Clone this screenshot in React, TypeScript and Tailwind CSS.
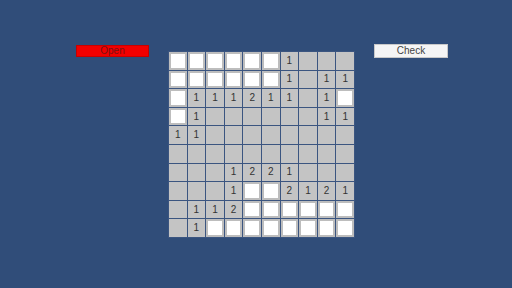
import React from 'react';

// W = revealed white tile, '' = grey blank, digits = grey with hint
const board: string[][] = [
  ['W', 'W', 'W', 'W', 'W', 'W', '1', '', '', ''],
  ['W', 'W', 'W', 'W', 'W', 'W', '1', '', '1', '1'],
  ['W', '1', '1', '1', '2', '1', '1', '', '1', 'W'],
  ['W', '1', '', '', '', '', '', '', '1', '1'],
  ['1', '1', '', '', '', '', '', '', '', ''],
  ['', '', '', '', '', '', '', '', '', ''],
  ['', '', '', '1', '2', '2', '1', '', '', ''],
  ['', '', '', '1', 'W', 'W', '2', '1', '2', '1'],
  ['', '1', '1', '2', 'W', 'W', 'W', 'W', 'W', 'W'],
  ['', '1', 'W', 'W', 'W', 'W', 'W', 'W', 'W', 'W'],
];

const Cell = ({ value }: { value: string }) => {
  if (value === 'W') {
    return <div className="border-2 border-[#bdbdbd] bg-white" />;
  }
  return (
    <div className="flex items-center justify-center bg-[#c4c4c4] text-[10px] leading-none text-[#333]">
      {value}
    </div>
  );
};

const App = () => {
  return (
    <div
      className="flex items-start w-[512px] h-[288px] bg-[#304d79]"
      style={{ fontFamily: '"Liberation Sans", Arial, sans-serif' }}
    >
      <button className="ml-[76px] mt-[45px] w-[73px] h-[12px] flex items-center justify-center bg-[#f20000] border border-[#c80000] text-[10px] leading-none text-[#7a1212]">
        Open
      </button>

      <div className="ml-[19px] mt-[51px] grid grid-cols-10 grid-rows-10 gap-px w-[187px] h-[187px] bg-[#3b5580] border border-[#3b5580]">
        {board.flatMap((row, r) =>
          row.map((v, c) => <Cell key={`${r}-${c}`} value={v} />)
        )}
      </div>

      <button className="ml-[19px] mt-[44px] w-[74px] h-[14px] flex items-center justify-center bg-[#f5f5f5] border border-[#c9c9c9] text-[10px] leading-none text-[#444]">
        Check
      </button>
    </div>
  );
};

export default App;
